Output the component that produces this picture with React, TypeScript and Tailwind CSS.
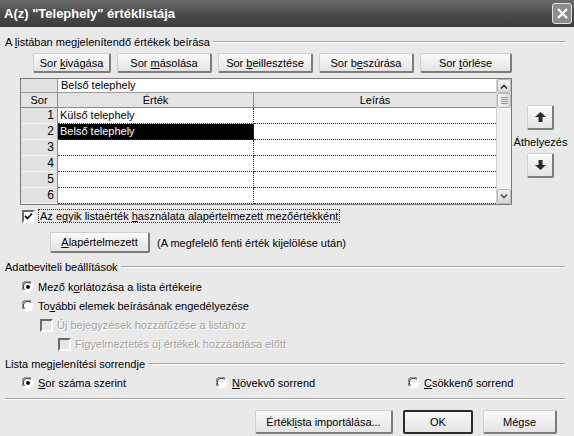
import type { ReactNode } from 'react';

const FONT = "font-['Liberation_Sans',Arial,sans-serif]";

function Btn({ children, className = '', isDefault = false }: { children: ReactNode; className?: string; isDefault?: boolean }) {
  return (
    <div
      className={`flex items-center justify-center rounded-[2px] bg-gradient-to-b from-[#fafafa] to-[#e4e4e4] ${
        isDefault
          ? 'border-2 border-[#2a2a2a]'
          : 'border border-[#d0d0d0] border-r-2 border-b-2 border-r-[#7c7c7c] border-b-[#7c7c7c]'
      } ${className}`}
    >
      <span className="whitespace-pre">{children}</span>
    </div>
  );
}

function Legend({ children }: { children: ReactNode }) {
  return (
    <div className="flex items-center h-[14px] pr-[4px]">
      <span className="pr-[3px]">{children}</span>
      <div className="flex-1 border-t border-[#a5a5a5] border-b border-b-white" />
    </div>
  );
}

function Radio({ checked }: { checked?: boolean }) {
  return (
    <svg width="12" height="12" viewBox="0 0 12 12" className="shrink-0">
      <circle cx="6" cy="6" r="5.5" fill="#fff" />
      <path d="M1.5 9 A5 5 0 0 1 9 1.5" stroke="#7a7a7a" strokeWidth="1.2" fill="none" />
      <path d="M2.6 8.6 A3.8 3.8 0 0 1 8.6 2.6" stroke="#2a2a2a" strokeWidth="1" fill="none" />
      {checked && <circle cx="6" cy="6" r="2" fill="#111" />}
    </svg>
  );
}

function Check({ checked, disabled }: { checked?: boolean; disabled?: boolean }) {
  return (
    <div
      className={`w-[13px] h-[13px] shrink-0 border-2 border-t-[#6a6a6a] border-l-[#6a6a6a] border-r-white border-b-white ${
        disabled ? 'bg-[#e6e6e6]' : 'bg-white'
      } flex items-center justify-center`}
    >
      {checked && (
        <svg width="9" height="9" viewBox="0 0 9 9">
          <path d="M1 4 L3.5 6.5 L8 1.5" stroke="#111" strokeWidth="1.8" fill="none" />
        </svg>
      )}
    </div>
  );
}

function Arrow({ up }: { up?: boolean }) {
  return (
    <svg width="11" height="10" viewBox="0 0 11 10" className={up ? '' : 'rotate-180'}>
      <polygon points="5.5,0 11,5 7.5,5 7.5,10 3.5,10 3.5,5 0,5" fill="#2b2b2b" />
    </svg>
  );
}

const rows = [
  { n: 1, v: 'Külső telephely' },
  { n: 2, v: 'Belső telephely', sel: true },
  { n: 3, v: '' },
  { n: 4, v: '' },
  { n: 5, v: '' },
  { n: 6, v: '' },
];

export default function App() {
  return (
    <div className={`w-[574px] h-[436px] overflow-hidden bg-[#e9e9e9] text-[11px] text-black leading-[14px] ${FONT}`}>
      {/* title bar */}
      <div className="h-[27px] flex items-center justify-between pl-[4px] pr-[2px] bg-gradient-to-b from-[#6d6d6d] via-[#4b4b4b] to-[#3d3d3d]">
        <span className="text-white font-bold text-[13px]">A(z) "Telephely" értéklistája</span>
        <div className="w-[20px] h-[21px] border border-[#e0e0e0] rounded-[3px] bg-[#8c8c8c] flex items-center justify-center">
          <svg width="11" height="11" viewBox="0 0 11 11">
            <path d="M1 1 L10 10 M10 1 L1 10" stroke="#fff" strokeWidth="2.2" />
          </svg>
        </div>
      </div>

      <div className="pl-[5px] pr-[5px]">
        <div className="mt-[8px]">
          <Legend>
            A <u>l</u>istában megjelenítendő értékek beírása
          </Legend>
        </div>

        {/* toolbar buttons */}
        <div className="flex gap-[6px] pl-[28px] mt-[4px]">
          <Btn className="w-[78px] h-[20px]">Sor <u>k</u>ivágása</Btn>
          <Btn className="w-[95px] h-[20px]">Sor <u>m</u>ásolása</Btn>
          <Btn className="w-[95px] h-[20px]">Sor <u>b</u>eillesztése</Btn>
          <Btn className="w-[95px] h-[20px]">Sor b<u>e</u>szúrása</Btn>
          <Btn className="w-[92px] h-[20px]">Sor <u>t</u>örlése</Btn>
        </div>

        {/* grid + move buttons */}
        <div className="flex mt-[5px] pl-[15px]">
          <div className="w-[492px] h-[127px] border border-[#7a7a7a] flex bg-white">
            <div className="flex-1 flex flex-col">
              <div className="h-[14px] flex border-b border-[#9a9a9a]">
                <div className="w-[37px] bg-[#e2e2e2] border-r border-[#9a9a9a]" />
                <div className="flex-1 pl-[3px] leading-[13px]">Belső telephely</div>
              </div>
              <div className="h-[15px] flex bg-[#e4e4e4] border-b border-[#8a8a8a]">
                <div className="w-[37px] text-center border-r border-[#8a8a8a]">Sor</div>
                <div className="w-[196px] text-center border-r border-[#8a8a8a]">Érték</div>
                <div className="flex-1 text-center">Leírás</div>
              </div>
              {rows.map(r => (
                <div key={r.n} className="h-[16px] flex">
                  <div className="w-[37px] bg-[#e2e2e2] border-r border-[#8a8a8a] border-b border-b-[#f4f4f4] text-right pr-[3px] leading-[15px] text-[12px]">
                    {r.n}
                  </div>
                  <div
                    className={`w-[196px] pl-[2px] leading-[15px] border-r border-b border-dotted border-[#333] ${
                      r.sel ? 'bg-black text-white' : ''
                    }`}
                  >
                    {r.v}
                  </div>
                  <div className="flex-1 border-b border-dotted border-[#333]" />
                </div>
              ))}
            </div>
            {/* scrollbar */}
            <div className="w-[15px] flex flex-col bg-[#f2f2f2] border-l border-[#cfcfcf]">
              <div className="h-[14px] bg-gradient-to-b from-[#f6f6f6] to-[#d8d8d8] border border-[#b8b8b8] rounded-[2px] flex items-center justify-center">
                <svg width="8" height="5" viewBox="0 0 8 5">
                  <path d="M1 4.5 L4 1.5 L7 4.5" stroke="#333" strokeWidth="1.6" fill="none" />
                </svg>
              </div>
              <div className="h-[15px] bg-gradient-to-r from-[#f4f4f4] to-[#dadada] border border-[#b8b8b8] rounded-[2px] flex flex-col items-center justify-center gap-[1px]">
                <div className="w-[7px] h-px bg-[#9a9a9a]" />
                <div className="w-[7px] h-px bg-[#9a9a9a]" />
                <div className="w-[7px] h-px bg-[#9a9a9a]" />
                <div className="w-[7px] h-px bg-[#9a9a9a]" />
              </div>
              <div className="flex-1" />
              <div className="h-[15px] bg-gradient-to-b from-[#f0f0f0] to-[#d4d4d4] border border-[#b8b8b8] rounded-[2px] flex items-center justify-center">
                <svg width="8" height="5" viewBox="0 0 8 5">
                  <path d="M1 0.5 L4 3.5 L7 0.5" stroke="#555" strokeWidth="1.6" fill="none" />
                </svg>
              </div>
            </div>
          </div>
          <div className="flex-1 flex flex-col items-center mt-[27px]">
            <Btn className="w-[27px] h-[25px]">
              <Arrow up />
            </Btn>
            <div className="mt-[5px] h-[14px]">Áthelyezés</div>
            <Btn className="w-[27px] h-[25px] mt-[4px]">
              <Arrow />
            </Btn>
          </div>
        </div>

        {/* default value checkbox */}
        <div className="flex items-center gap-[3px] mt-[4px] pl-[17px] h-[14px]">
          <Check checked />
          <span className="border border-dotted border-[#333] px-px leading-[12px]">
            Az egyik listaérték <u>h</u>asználata alapértelmezett mezőértékként
          </span>
        </div>

        <div className="flex items-center mt-[9px] pl-[45px]">
          <Btn className="w-[100px] h-[21px]">
            <u>A</u>lapértelmezett
          </Btn>
          <span className="ml-[7px]">(A megfelelő fenti érték kijelölése után)</span>
        </div>

        {/* data entry settings */}
        <div className="mt-[7px]">
          <Legend>Adatbeviteli beállítások</Legend>
        </div>
        <div className="flex items-center gap-[4px] pl-[17px] mt-[6px] h-[14px]">
          <Radio checked />
          <span>
            Mező k<u>o</u>rlátozása a lista értékeire
          </span>
        </div>
        <div className="flex items-center gap-[4px] pl-[17px] mt-[5px] h-[14px]">
          <Radio />
          <span>
            To<u>v</u>ábbi elemek beírásának engedélyezése
          </span>
        </div>
        <div className="flex items-center gap-[4px] pl-[35px] mt-[5px] h-[14px] text-[#a4a4a4] [text-shadow:1px_1px_0_#fff]">
          <Check disabled />
          <span>Új bejegyzések hozzáfűzése a listához</span>
        </div>
        <div className="flex items-center gap-[4px] pl-[53px] mt-[5px] h-[14px] text-[#a4a4a4] [text-shadow:1px_1px_0_#fff]">
          <Check disabled />
          <span>Figyelmeztetés új értékek hozzáadása előtt</span>
        </div>

        {/* sort order */}
        <div className="mt-[6px]">
          <Legend>Lista megjelenítési sorrendje</Legend>
        </div>
        <div className="flex items-center mt-[5px] h-[14px]">
          <div className="flex items-center gap-[4px] pl-[17px] w-[211px]">
            <Radio checked />
            <span>
              <u>S</u>or száma szerint
            </span>
          </div>
          <div className="flex items-center gap-[4px] w-[192px]">
            <Radio />
            <span>
              <u>N</u>övekvő sorrend
            </span>
          </div>
          <div className="flex items-center gap-[4px]">
            <Radio />
            <span>
              <u>C</u>sökkenő sorrend
            </span>
          </div>
        </div>

        <div className="mt-[8px] mr-[4px] border-t border-[#a5a5a5] border-b border-b-white" />

        <div className="flex mt-[10px] pl-[250px] gap-[10px]">
          <Btn className="w-[138px] h-[24px]">
            Értékl<u>i</u>sta importálása...
          </Btn>
          <Btn className="w-[70px] h-[24px]" isDefault>
            OK
          </Btn>
          <Btn className="w-[74px] h-[24px]">Mégse</Btn>
        </div>
      </div>
    </div>
  );
}
